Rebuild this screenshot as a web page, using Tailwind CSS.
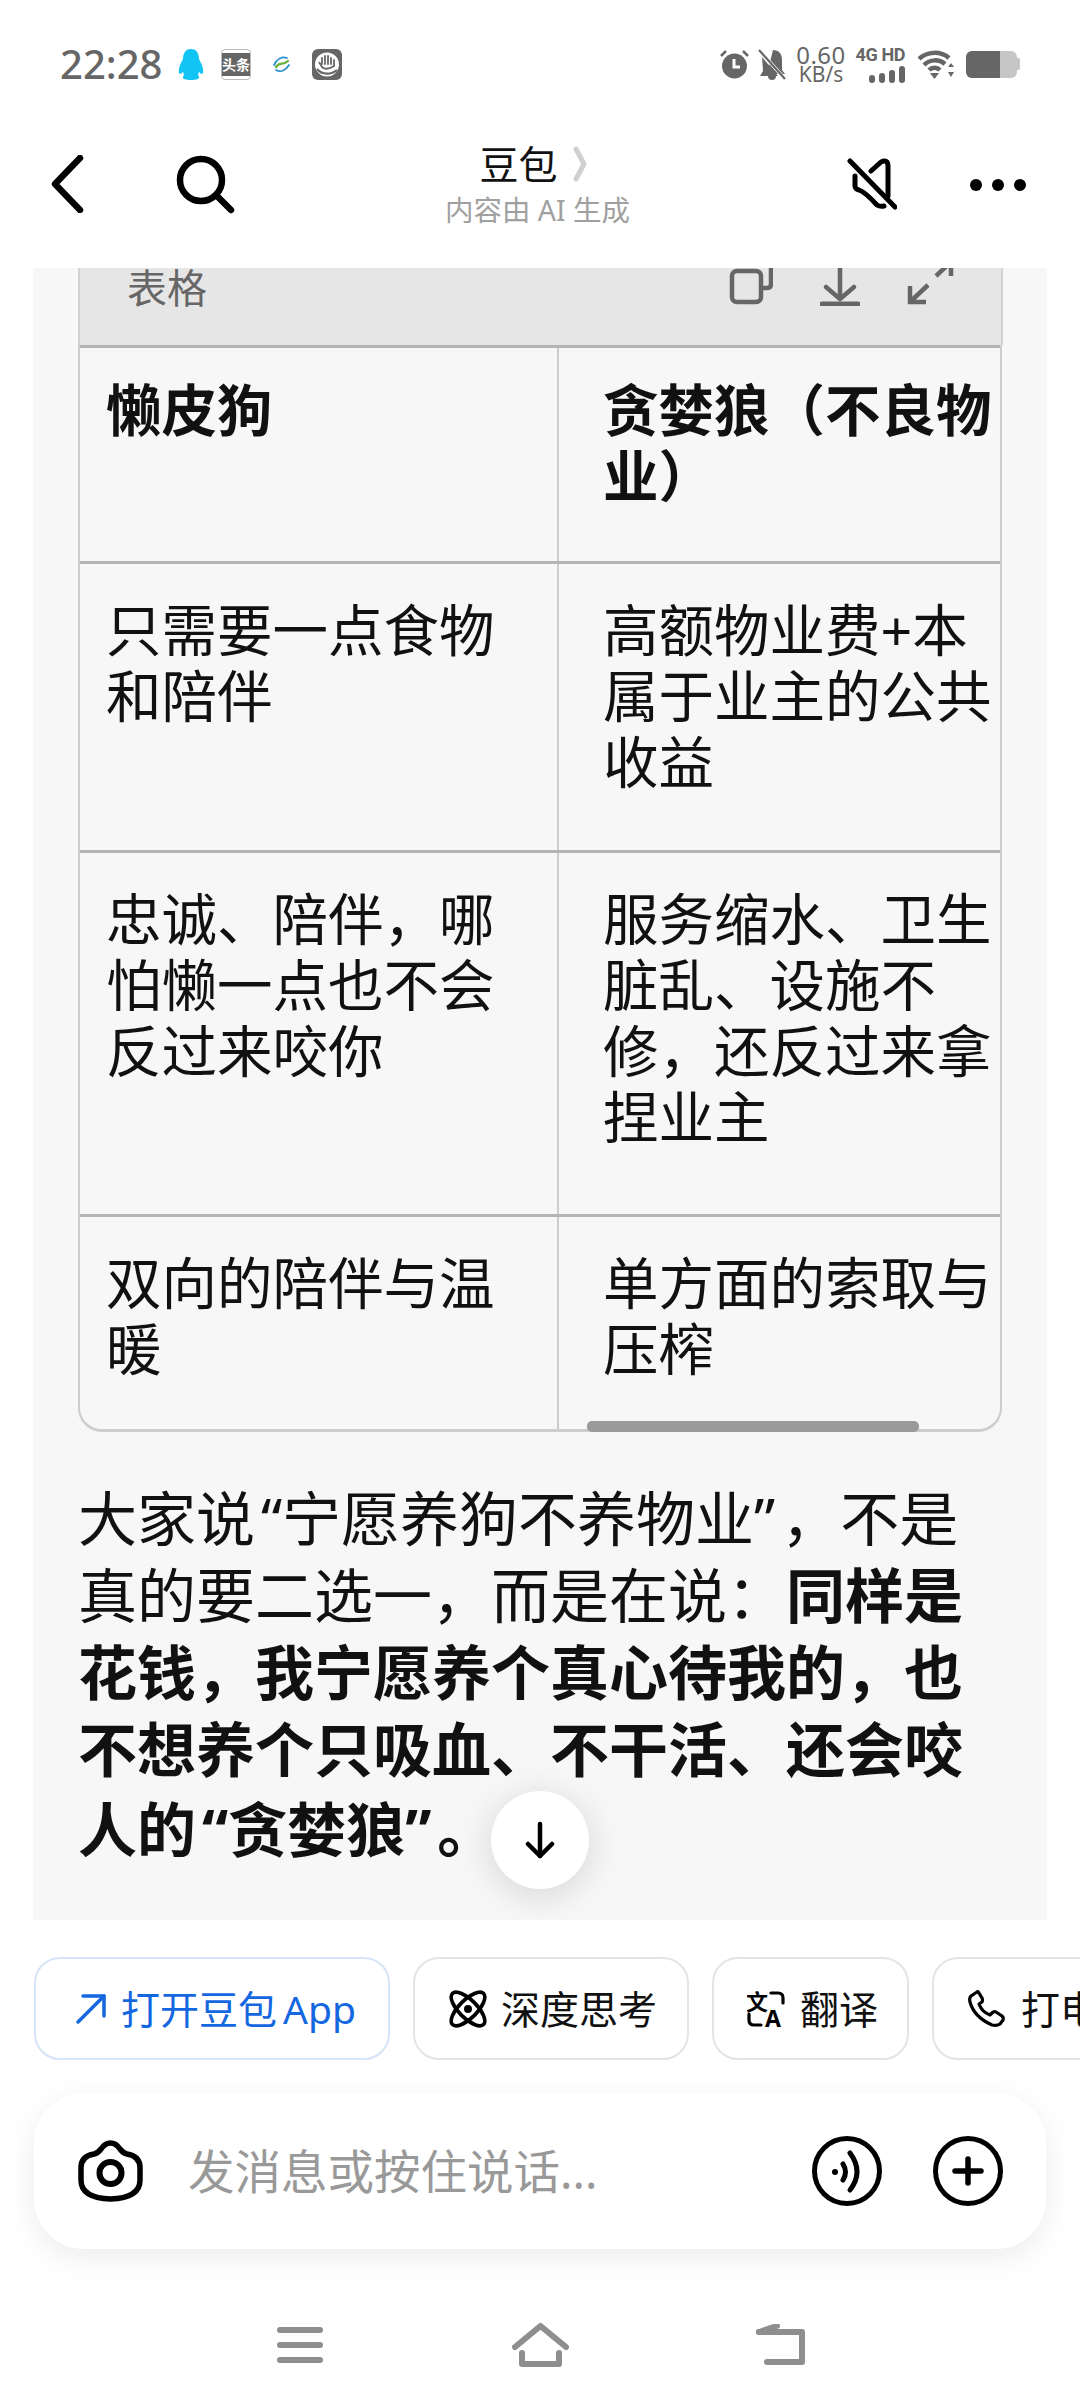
<!DOCTYPE html>
<html lang="zh-CN">
<head>
    <meta charset="UTF-8">
    <meta name="viewport" content="width=device-width, initial-scale=1.0">
    <title>豆包</title>
    <script src="https://cdn.jsdelivr.net/npm/@tailwindcss/browser@4"></script>
</head>
<body class="bg-white">
<div class="w-[1080px] h-[2408px] overflow-hidden bg-white flex flex-col text-[#111] font-['Noto_Sans','Noto_Sans_CJK_SC',sans-serif]">

    <!-- Status bar -->
    <div class="h-[100px] pt-[28px] pl-[60px] pr-[60px] flex items-center text-[#666] shrink-0">
        <span class="w-[99px] text-[40px] font-medium leading-none">22:28</span>
        <svg class="ml-[19px]" width="26" height="31" viewBox="0 0 26 31"><path fill="#12c4f6" d="M13 0C7 0 5 5 5 10C3 14 0 19 1 24C2 26 4 24 5 23C6 25 6 26 5 28C4 30 8 31 13 31C18 31 22 30 21 28C20 26 20 25 21 23C22 24 24 26 25 24C26 19 23 14 21 10C21 5 19 0 13 0Z"/></svg>
        <div class="ml-[17px] w-[30px] h-[31px] rounded-[4px] border border-[#bbb] flex items-center justify-center overflow-hidden">
            <span class="w-full h-[23px] bg-[#666] text-white text-[14px] font-bold leading-[23px] text-center whitespace-nowrap">头条</span>
        </div>
        <svg class="ml-[21px]" width="19" height="19" viewBox="0 0 19 19" fill="none" stroke-linecap="round"><path d="M2 10C5 4 10 1 15 3" stroke="#2a93c9" stroke-width="1.8"/><path d="M4 12C8 6 11 11 16 6" stroke="#6cb33f" stroke-width="2.4"/><path d="M4 15C9 18 14 15 17 10" stroke="#2a93c9" stroke-width="1.8"/></svg>
        <svg class="ml-[21px]" width="30" height="31" viewBox="0 0 30 31" fill="none"><rect width="30" height="31" rx="6" fill="#666"/><circle cx="15" cy="15.5" r="12" fill="#fff"/><path d="M10 15V9M13 15V7M16 15V7M19 15V9M22 17V11" stroke="#666" stroke-width="1.8" stroke-linecap="round"/><path d="M7 13L10 18Q14 22 22 17" stroke="#666" stroke-width="1.8"/><path d="M5 20C10 26 19 26 25 21" stroke="#666" stroke-width="2.2"/></svg>

        <svg class="ml-auto" width="29" height="30" viewBox="0 0 29 30" fill="none"><circle cx="14.5" cy="17" r="12.5" fill="#666"/><path d="M14 10V18H20" stroke="#fff" stroke-width="3"/><path d="M1 7L6 2M28 7L23 2" stroke="#666" stroke-width="2.5"/></svg>
        <svg class="ml-[9px]" width="28" height="31" viewBox="0 0 28 31" fill="none"><path fill="#666" d="M15 1C21 1 24 5 24 11V21L27 25H9ZM4 8L20 27H2L5 22Z"/><path d="M10 27a4 4 0 0 0 8 0Z" fill="#666"/><path d="M1 1L27 30" stroke="#fff" stroke-width="3.6"/><path d="M1 1L27 30" stroke="#666" stroke-width="2.2"/></svg>
        <div class="ml-[10px] w-[50px] flex flex-col items-center leading-none">
            <span class="text-[24px] leading-[20px] tracking-[0.5px]">0.60</span>
            <span class="text-[21px] leading-[18px]">KB/s</span>
        </div>
        <div class="ml-[11px] w-[48px] flex flex-col items-end">
            <span class="text-[18px] font-bold leading-[17px] tracking-[-0.4px] whitespace-nowrap font-['Roboto',sans-serif]">4G HD</span>
            <svg class="mt-[3px]" width="36" height="17" viewBox="0 0 36 17" fill="#666"><rect x="0" y="9" width="6" height="8" rx="3"/><rect x="10" y="7" width="6" height="10" rx="3"/><rect x="20" y="4" width="6" height="13" rx="3"/><rect x="30" y="0" width="6" height="17" rx="3"/></svg>
        </div>
        <svg class="ml-[13px]" width="38" height="30" viewBox="0 0 38 30" fill="none" stroke="#666" stroke-width="4.5"><path d="M1 10C9 2 23 2 31 9"/><path d="M6 16C12 10 21 10 27 15"/><path d="M11 21C14 18 19 18 22 21"/><path d="M12 24H21L16.5 30Z" fill="#666" stroke="none"/><path d="M30 18L33 14L36 18ZM30 23H36L33 28Z" fill="#666" stroke="none"/></svg>
        <div class="ml-[10px] w-[51px] h-[27px] rounded-[6px] overflow-hidden bg-[#c6c6c6] flex">
            <div class="w-[34px] bg-[#666]"></div>
        </div>
        <div class="w-[3px] h-[12px] rounded-r-[2px] bg-[#c6c6c6]"></div>
    </div>

    <!-- Title bar -->
    <div class="h-[168px] shrink-0 flex items-center pl-[49px] pr-[54px]">
        <div class="flex-1 flex items-center">
            <svg width="36" height="58" viewBox="0 0 36 58" fill="none" stroke="#000" stroke-width="6.5" stroke-linecap="round" stroke-linejoin="round"><path d="M31 3L6 29L31 55"/></svg>
            <svg class="ml-[90px]" width="60" height="60" viewBox="0 0 60 60" fill="none" stroke="#000" stroke-width="6.5" stroke-linecap="round"><circle cx="26" cy="26" r="21"/><path d="M42 42L56 56"/></svg>
        </div>
        <div class="flex flex-col items-center">
            <div class="flex items-center h-[44px] mr-[9px]">
                <span class="text-[39px] leading-none">豆包</span>
                <svg class="ml-[15px]" width="14" height="36" viewBox="0 0 14 36" fill="none" stroke="#d0d0d0" stroke-width="5" stroke-linecap="round" stroke-linejoin="round"><path d="M3 3L11 18L3 33"/></svg>
            </div>
            <span class="mt-[7px] text-[28.5px] leading-[34px] text-[#a0a0a0] whitespace-nowrap">内容由 AI 生成</span>
        </div>
        <div class="flex-1 flex items-center justify-end">
            <svg width="50" height="52" viewBox="0 0 50 52" fill="none" stroke="#000" stroke-width="5" stroke-linecap="round" stroke-linejoin="round"><path d="M3 3L48 49"/><path d="M24 13L34 4Q41 1 41 8V38"/><path d="M8 18V28Q8 31 12 32Q18 34 30 47Q33 49 37 48"/></svg>
            <svg class="ml-[73px] mt-[2px]" width="56" height="12" viewBox="0 0 56 12" fill="#000"><circle cx="6" cy="6" r="6"/><circle cx="28" cy="6" r="6"/><circle cx="50" cy="6" r="6"/></svg>
        </div>
    </div>

    <!-- Conversation -->
    <div class="relative h-[1652px] shrink-0 overflow-hidden px-[33px]">
        <div class="h-full flow-root bg-[#f7f7f7] pl-[45px] pr-[44px]">
            <div class="h-[110px] -mt-[33px] bg-[#e6e6e6] border-x-2 border-[#d2d2d2] flex items-end pb-[39px] pl-[47px] text-[#666]">
                <span class="text-[40px] leading-[44px] w-[602px] -mb-[4px]">表格</span>
                <svg width="44" height="40" viewBox="0 0 44 40" fill="none" stroke="#666" stroke-width="4.5" stroke-linejoin="round"><rect x="3" y="5" width="29" height="31" rx="5"/><path d="M42 0V18Q42 22 38 22H32"/></svg>
                <svg class="ml-[47px]" width="40" height="40" viewBox="0 0 40 40" fill="none" stroke="#666" stroke-width="4.5" stroke-linecap="round" stroke-linejoin="round"><path d="M20 0V32"/><path d="M6 21L20 33L34 21"/><path d="M2 38H38" stroke-width="5"/></svg>
                <svg class="ml-[46px]" width="48" height="40" viewBox="0 0 48 40" fill="none" stroke="#666" stroke-width="4.5"><path d="M4 36L22 19"/><path d="M4 20V36H20"/><path d="M30 10L47 -6"/><path d="M45 -6V10"/></svg>
            </div>

            <div class="relative w-[924px] h-[1087px] border-x-2 border-b-[3px] border-[#cdcdcd] rounded-b-[24px] text-[55.5px] leading-[66px]">
                <div class="h-[219px] flex border-y-[3px] border-[#b4b4b4] font-bold">
                    <div class="w-[479px] shrink-0 pl-[26px] pr-[30px] pt-[29px] border-r-2 border-[#ccc]">懒皮狗</div>
                    <div class="flex-1 pl-[44px] pt-[29px]">贪婪狼（不良物业）</div>
                </div>
                <div class="h-[289px] flex border-b-[3px] border-[#b4b4b4]">
                    <div class="w-[479px] shrink-0 pl-[26px] pr-[30px] pt-[33px] border-r-2 border-[#ccc]">只需要一点食物和陪伴</div>
                    <div class="flex-1 pl-[44px] pt-[33px]">高额物业费+本属于业主的公共收益</div>
                </div>
                <div class="h-[364px] flex border-b-[3px] border-[#b4b4b4]">
                    <div class="w-[479px] shrink-0 pl-[26px] pr-[30px] pt-[33px] border-r-2 border-[#ccc]">忠诚、陪伴，哪怕懒一点也不会反过来咬你</div>
                    <div class="flex-1 pl-[44px] pt-[33px]">服务缩水、卫生脏乱、设施不修，还反过来拿捏业主</div>
                </div>
                <div class="h-[212px] flex">
                    <div class="w-[479px] shrink-0 pl-[26px] pr-[30px] pt-[33px] border-r-2 border-[#ccc]">双向的陪伴与温暖</div>
                    <div class="flex-1 pl-[44px] pt-[33px]">单方面的索取与压榨</div>
                </div>
                <div class="absolute left-[507px] bottom-[-3px] w-[332px] h-[11px] rounded-[5px] bg-[#9a9a9a]"></div>
            </div>

            <p class="mt-[48px] w-[900px] text-[59px] leading-[77px]">大家说<span class="ml-[0.1em]">“</span>宁愿养狗不养物业<span class="mr-[0.1em]">”</span>，不是真的要二选一，而是在说：<b>同样是花钱，我宁愿养个真心待我的，也不想养个只吸血、不干活、还会咬<span class="inline-block mt-[3px]">人的<span class="ml-[0.1em]">“</span>贪婪狼<span class="mr-[0.1em]">”</span>。</span></b></p>
        </div>

        <div class="absolute left-[491px] top-[1523px] w-[98px] h-[98px] rounded-full bg-white shadow-[0_6px_36px_rgba(0,0,0,0.14)] flex items-center justify-center">
            <svg width="34" height="38" viewBox="0 0 34 38" fill="none" stroke="#000" stroke-width="4.5" stroke-linecap="round" stroke-linejoin="round"><path d="M17 3V35"/><path d="M5 23L17 35L29 23"/></svg>
        </div>
    </div>

    <!-- Shortcut chips -->
    <div class="mt-[37px] h-[103px] shrink-0 flex gap-[23px] pl-[34px] overflow-hidden text-[39px] leading-none">
        <div class="w-[356px] shrink-0 rounded-[26px] border-2 border-[#d5e4f9] flex items-center pl-[39px] text-[#1467e0]">
            <svg width="32" height="32" viewBox="0 0 32 32" fill="none" stroke="#1467e0" stroke-width="3.5" stroke-linecap="round" stroke-linejoin="round"><path d="M3 29L29 3"/><path d="M8 3H29V23"/></svg>
            <span class="ml-[14px] text-[39px] whitespace-nowrap">打开豆包<span class="ml-[6px]">App</span></span>
        </div>
        <div class="w-[276px] shrink-0 rounded-[26px] border-2 border-[#e4e4e4] flex items-center pl-[34px]">
            <svg width="38" height="38" viewBox="0 0 38 38" fill="none" stroke="#000" stroke-width="3.6"><ellipse cx="19" cy="19" rx="9" ry="22" transform="rotate(45 19 19)"/><ellipse cx="19" cy="19" rx="9" ry="22" transform="rotate(-45 19 19)"/><circle cx="19" cy="19" r="4" fill="#000" stroke="none"/></svg>
            <span class="ml-[14px] whitespace-nowrap">深度思考</span>
        </div>
        <div class="w-[197px] shrink-0 rounded-[26px] border-2 border-[#e4e4e4] flex items-center pl-[33px]">
            <svg width="38" height="38" viewBox="0 0 38 38" fill="none" stroke="#000" stroke-width="3.2" stroke-linecap="round"><text x="-1" y="20" font-size="22" font-weight="700" fill="#000" stroke="none">文</text><text x="18" y="37" font-size="23" font-weight="700" fill="#000" stroke="none">A</text><path d="M24 3H31Q36 3 36 8V13"/><path d="M2 24V30Q2 35 7 35H14"/></svg>
            <span class="ml-[15px] whitespace-nowrap">翻译</span>
        </div>
        <div class="w-[260px] shrink-0 rounded-[26px] border-2 border-[#e4e4e4] flex items-center pl-[34px]">
            <svg width="37" height="37" viewBox="0 0 37 37" fill="none" stroke="#000" stroke-width="3.2" stroke-linejoin="round"><path d="M9 2L3 6Q1 8 2 12Q6 27 24 35Q29 36 32 34L35 30Q36 28 34 26L28 22Q26 21 24 23L22 25Q14 22 11 14L14 12Q15 10 14 8L11 3Q10 1 9 2Z"/></svg>
            <span class="ml-[16px] whitespace-nowrap">打电话</span>
        </div>
    </div>

    <!-- Input -->
    <div class="mt-[33px] mx-[34px] h-[156px] shrink-0 rounded-[50px] bg-white shadow-[0_8px_30px_rgba(0,0,0,0.08)] flex items-center pl-[44px] pr-[43px]">
        <svg width="65" height="62" viewBox="0 0 65 62" fill="none" stroke="#000" stroke-width="5.5" stroke-linejoin="round"><path d="M16 14Q20 13 23 9Q27 3 32.5 3Q38 3 42 9Q45 13 49 14Q62 16 62 28V40Q62 58 32.5 59Q3 58 3 40V28Q3 16 16 14Z"/><circle cx="32.5" cy="33" r="11" stroke-width="6"/></svg>
        <span class="ml-[45px] text-[46.5px] leading-none text-[#999] whitespace-nowrap">发消息或按住说话...</span>
        <svg class="ml-auto" width="70" height="70" viewBox="0 0 70 70" fill="none" stroke="#000" stroke-width="5" stroke-linecap="round"><circle cx="35" cy="35" r="32.5"/><circle cx="23" cy="36" r="3" fill="#000" stroke="none"/><path d="M31 28Q36 36 31 44"/><path d="M38 17Q52 36 38 54"/></svg>
        <svg class="ml-[51px]" width="70" height="70" viewBox="0 0 70 70" fill="none" stroke="#000" stroke-width="5" stroke-linecap="round"><circle cx="35" cy="35" r="32.5"/><path d="M35 23V47M22 35H48" stroke-width="5.5"/></svg>
    </div>

    <!-- Navigation bar -->
    <div class="h-[159px] pt-[32px] shrink-0 flex items-center pl-[277px]">
        <svg width="46" height="36" viewBox="0 0 46 36" fill="none" stroke="#8e8e8e" stroke-width="6" stroke-linecap="round"><path d="M3 3H43M3 18H43M3 33H43"/></svg>
        <svg class="ml-[189px]" width="57" height="44" viewBox="0 0 57 44" fill="none" stroke="#8e8e8e" stroke-width="6" stroke-linecap="round" stroke-linejoin="round"><path d="M3 24L28.5 3L54 24"/><path d="M10 30V41H47V30"/></svg>
        <svg class="ml-[187px]" width="49" height="42" viewBox="0 0 49 42" fill="none" stroke="#8e8e8e" stroke-width="6" stroke-linecap="round" stroke-linejoin="round"><path d="M3 8L21 2"/><path d="M3 8H46V38H11"/></svg>
    </div>
</div>
</body>
</html>
